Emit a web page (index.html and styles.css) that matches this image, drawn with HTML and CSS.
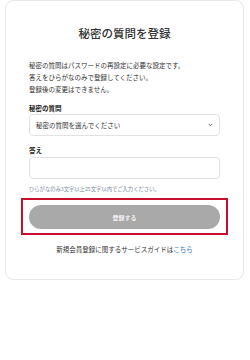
FILE: index.html
```html
<!DOCTYPE html>
<html lang="ja">
<head>
<meta charset="utf-8">
<link rel="stylesheet" href="styles.css">
</head>
<body>
<div class="page">
  <div class="card">
    <h1 class="title">秘密の質問を登録</h1>
    <p class="desc">秘密の質問はパスワードの再設定に必要な設定です。<br>答えをひらがなのみで登録してください。<br>登録後の変更はできません。</p>
    <div class="field field-question">
      <div class="label">秘密の質問</div>
      <div class="select">
        <span>秘密の質問を選んでください</span>
        <svg class="chev" width="5" height="4" viewBox="0 0 5 4"><path d="M0.8 1 L2.5 2.8 L4.2 1" fill="none" stroke="#666" stroke-width="0.9"/></svg>
      </div>
    </div>
    <div class="field field-answer">
      <div class="label">答え</div>
      <div class="input"></div>
      <div class="hint">ひらがなのみ3文字以上25文字以内でご入力ください。</div>
    </div>
    <div class="highlight">
      <div class="btn">登録する</div>
    </div>
    <p class="guide">新規会員登録に関するサービスガイドは<span class="link">こちら</span></p>
  </div>
</div>
</body>
</html>
```
FILE: styles.css
```css
* { box-sizing: border-box; }
html, body { margin: 0; padding: 0; background: #fff; }
body { font-family: "Noto Sans CJK JP", "Noto Sans", sans-serif; color: #333; }
.page { padding: 0 6px 0 5px; }
.card {
  border: 1px solid #e8e8e8;
  border-radius: 8px;
  height: 280px;
  padding: 24px 23px 0 23px;
  display: flex;
  flex-direction: column;
}
.title {
  margin: 0;
  font-size: 11.5px;
  line-height: 17px;
  font-weight: 500;
  text-align: center;
  color: #333;
}
.desc {
  margin: 17px 0 0;
  font-size: 6.5px;
  line-height: 12px;
  color: #333;
}
.field-question { margin-top: 9px; }
.field-answer { margin-top: 10px; }
.label {
  font-size: 6.5px;
  font-weight: 700;
  line-height: 9px;
  color: #222;
}
.select {
  margin-top: 1px;
  height: 22px;
  border: 1px solid #e2e2e2;
  border-radius: 4px;
  display: flex;
  align-items: center;
  justify-content: space-between;
  padding: 0 6px 0 6px;
  font-size: 6.5px;
  color: #333;
}
.chev { display: block; }
.input {
  margin-top: 2px;
  height: 22px;
  border: 1px solid #e2e2e2;
  border-radius: 4px;
}
.hint {
  margin-top: 6px;
  font-size: 5.3px;
  line-height: 8px;
  color: #7a8aa0;
}
.highlight {
  margin: 5px -8px 0;
  border: 2px solid #c8102e;
  padding: 5px 6px 4px;
}
.btn {
  height: 24px;
  border-radius: 12px;
  background: #a9a9a9;
  color: #fff;
  font-size: 6px;
  font-weight: 500;
  display: flex;
  align-items: center;
  justify-content: center;
}
.guide {
  margin: 9px 0 0;
  text-align: center;
  font-size: 6.5px;
  line-height: 10px;
  color: #333;
}
.link { color: #2a72c6; }
```
